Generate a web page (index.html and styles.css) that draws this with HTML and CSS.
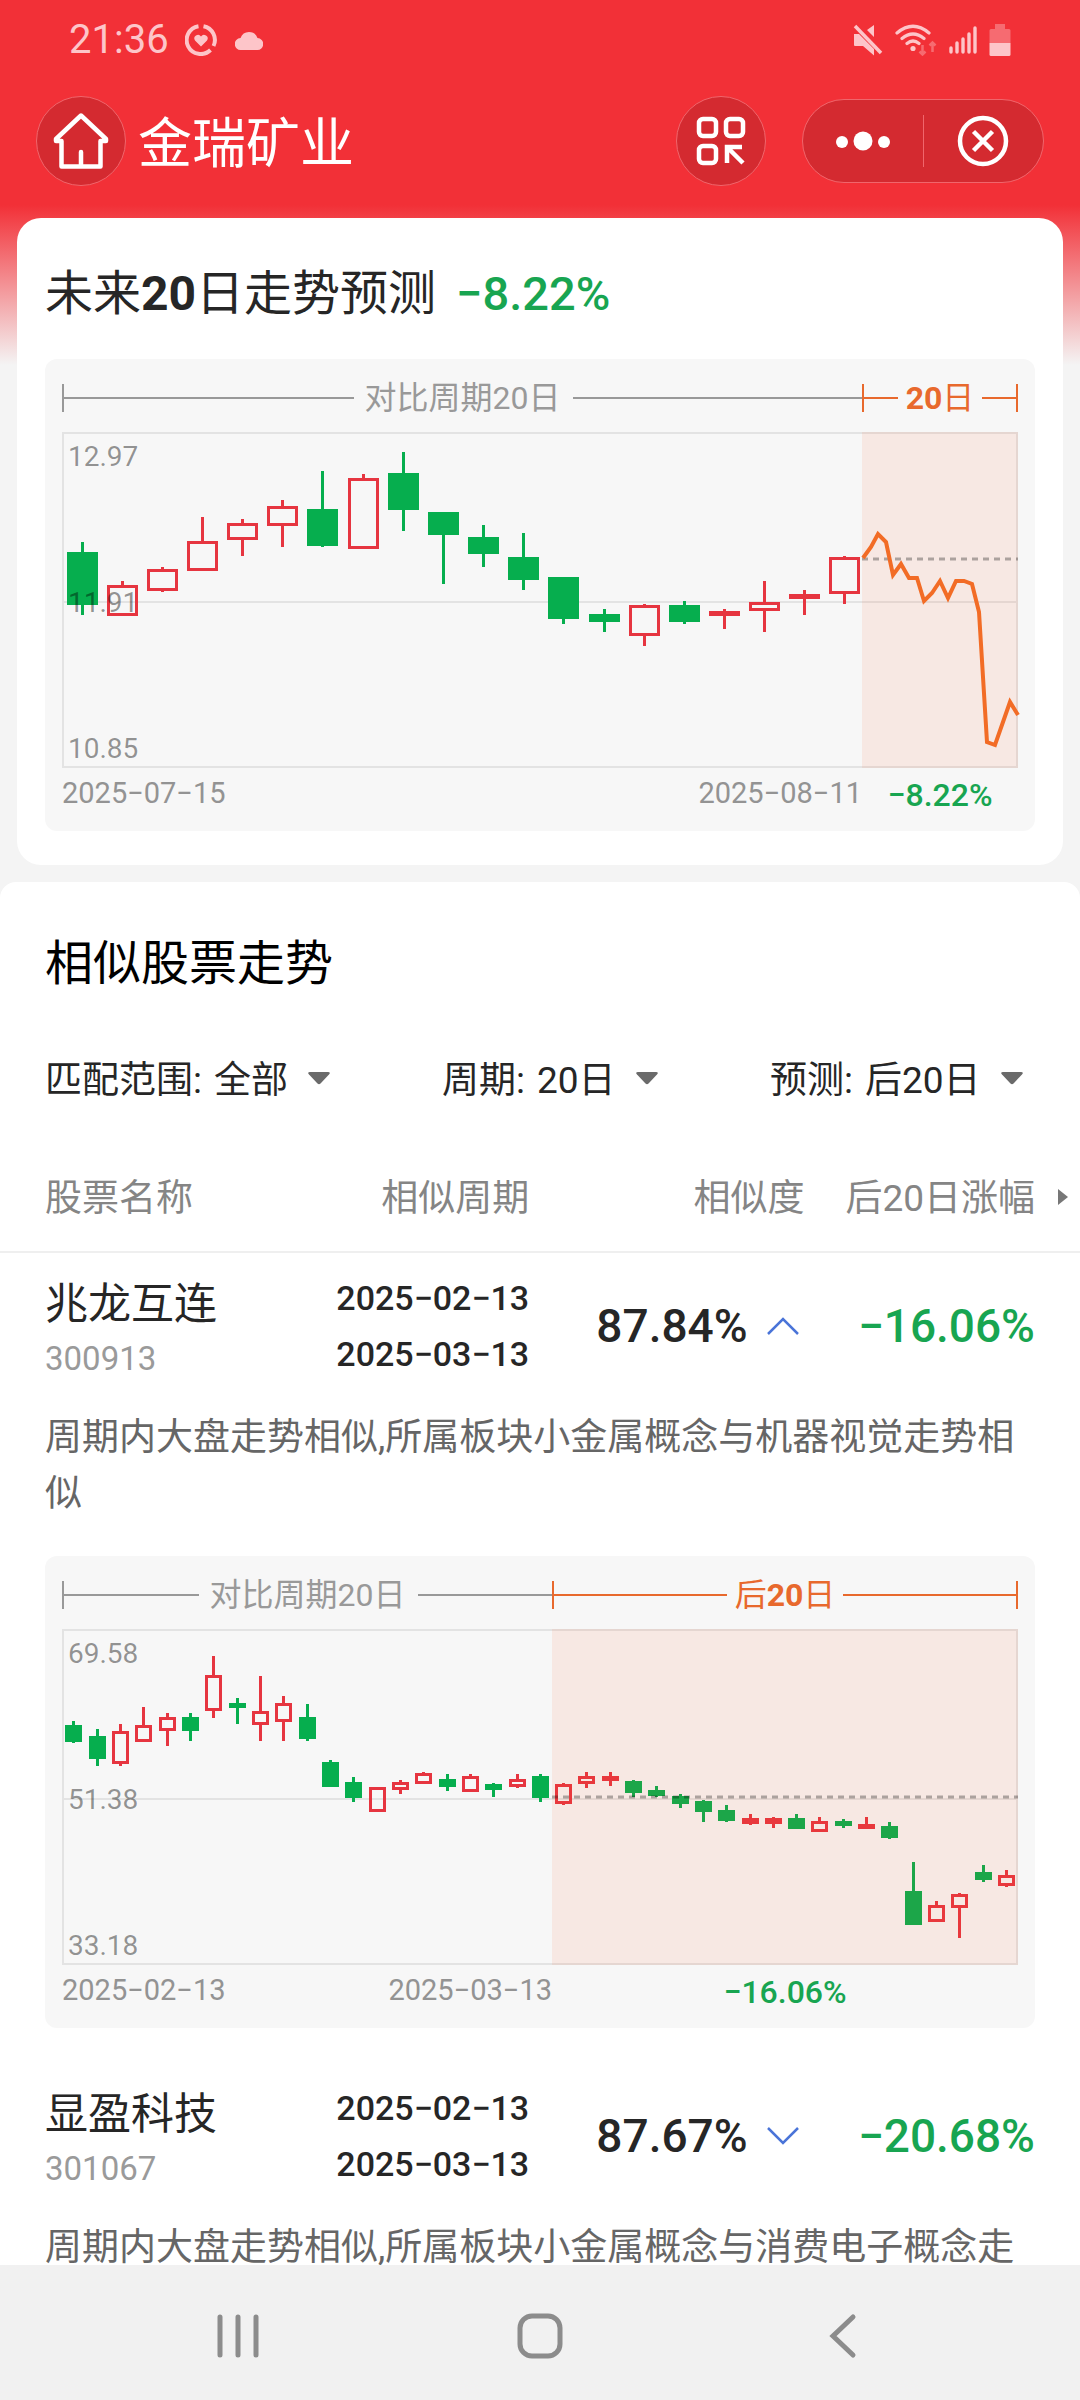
FILE: index.html
```html
<!DOCTYPE html>
<html lang="zh-CN">
<head>
<meta charset="utf-8">
<meta name="viewport" content="width=device-width, initial-scale=1">
<title>金瑞矿业</title>
<link rel="stylesheet" href="styles.css">
</head>
<body>
<div class="screen">
  <header class="top">
    <div class="status">
      <span class="clock">21:36</span>
      <svg class="st-ring" width="32" height="32" viewBox="0 0 32 32" fill="none" stroke="currentColor" stroke-width="4"><path d="M18.500 2.200A14 14 0 0 1 28.500 22M25.500 26A14 14 0 1 1 13.500 2.200"/><path d="M16 22.500l-6-6a3.600 3.600 0 0 1 6-4a3.600 3.600 0 0 1 6 4z" fill="currentColor" stroke="none"/></svg>
      <svg class="st-cloud" width="28" height="20" viewBox="0 0 28 20" fill="currentColor"><path d="M6 20a6 6 0 0 1-.5-12A9 9 0 0 1 22.500 8A6 6 0 0 1 22 20z"/></svg>
      <span class="spacer"></span>
      <svg width="30" height="32" viewBox="0 0 30 32" fill="currentColor"><path d="M1 10h5l15 15v6.500L10 22H2q-1 0-1-1zM21 1v12l-7-7z"/><path d="M2 2l26 27" stroke="currentColor" stroke-width="3.500"/></svg>
      <svg width="42" height="32" viewBox="0 0 42 32" fill="none" stroke="currentColor" stroke-width="3.200" stroke-linecap="round"><path d="M2 9Q18-4.500 34 9M7 14.500Q18 5.500 29 14.500M12 19.500Q18 14.500 24 19.500"/><circle cx="18" cy="24.500" r="2.600" fill="currentColor" stroke="none"/><path class="dim" d="M27.500 21v9M24.500 27.500l3 3 3-3M37.500 28v-9M34.500 21.500l3-3 3 3" stroke-width="2.500" stroke-linecap="butt"/></svg>
      <svg width="28" height="30" viewBox="0 0 28 30" stroke="currentColor" stroke-width="3.400" stroke-linecap="round"><path d="M2 27v-4M8 27v-9M14 27V14M20 27V9M26 27V3"/></svg>
      <svg width="22" height="34" viewBox="0 0 22 34" fill="currentColor"><path class="dim" d="M6 1h10v5h4q1.500 0 1.500 1.500V20H.5V7.500Q.5 6 2 6h4z"/><path d="M.5 20h21v11.500q0 1.500-1.500 1.500H2q-1.500 0-1.500-1.500z"/></svg>
    </div>
    <nav class="appbar">
      <button class="round" type="button" aria-label="首页"><svg width="56" height="56" viewBox="0 0 56 56" fill="none" stroke="currentColor" stroke-width="4.500" stroke-linejoin="round" stroke-linecap="round"><path d="M28 2.500L3 26v2h5.500v25.500h39V28H53v-2zM28 53V39"/></svg></button>
      <h1>金瑞矿业</h1>
      <button class="round scan" type="button" aria-label="扫码"><svg width="50" height="50" viewBox="0 0 50 50" fill="none" stroke="currentColor" stroke-width="4.500"><rect x="3" y="3" width="17" height="17" rx="4"/><rect x="30" y="3" width="17" height="17" rx="4"/><rect x="3" y="30" width="17" height="17" rx="4"/><path d="M46 31H31v16M32 32l15 15"/></svg></button>
      <div class="capsule">
        <button type="button" aria-label="更多"><svg width="54" height="20" viewBox="0 0 54 20" fill="currentColor"><circle cx="6" cy="11" r="6"/><circle cx="27" cy="10" r="9.500"/><circle cx="48" cy="11" r="6"/></svg></button>
        <button type="button" aria-label="关闭"><svg width="52" height="52" viewBox="0 0 52 52" fill="none" stroke="currentColor" stroke-width="4.500"><circle cx="26" cy="26" r="23"/><path d="M16.500 16.500l19 19M35.500 16.500l-19 19"/></svg></button>
      </div>
    </nav>
  </header>

  <main class="content">
    <section class="card">
      <h2>未来<b>20</b>日走势预测 <span class="down">−8.22%</span></h2>
      <figure class="chart" data-chart="forecast">
        <div class="range">
          <div class="span"><i class="tick"></i><i class="rule"></i><span>对比周期20日</span><i class="rule"></i></div>
          <div class="span after"><i class="tick"></i><i class="rule"></i><span><b>20</b>日</span><i class="rule"></i><i class="tick"></i></div>
        </div>
        <svg class="plot" viewBox="0 0 956 336" role="img" aria-label="未来20日走势预测"></svg>
        <figcaption class="dates">
          <div class="ends"><span>2025−07−15</span><span>2025−08−11</span></div>
          <div class="down">−8.22%</div>
        </figcaption>
      </figure>
    </section>

    <section class="similar">
      <h2>相似股票走势</h2>
      <form class="filters">
        <div class="filter"><label for="scope">匹配范围:</label><select id="scope"><option>全部</option></select><svg width="22" height="13" viewBox="0 0 22 13"><path d="M2 0h18q3 0 1 2.500l-8.500 9q-1.500 1.500-3 0L1 2.500Q-1 0 2 0z"/></svg></div>
        <div class="filter"><label for="period">周期:</label><select id="period"><option>20日</option></select><svg width="22" height="13" viewBox="0 0 22 13"><path d="M2 0h18q3 0 1 2.500l-8.500 9q-1.500 1.500-3 0L1 2.500Q-1 0 2 0z"/></svg></div>
        <div class="filter"><label for="ahead">预测:</label><select id="ahead"><option>后20日</option></select><svg width="22" height="13" viewBox="0 0 22 13"><path d="M2 0h18q3 0 1 2.500l-8.500 9q-1.500 1.500-3 0L1 2.500Q-1 0 2 0z"/></svg></div>
      </form>
      <table class="stocks">
        <thead>
          <tr><th class="c-name">股票名称</th><th class="c-period">相似周期</th><th class="c-match">相似度</th><th class="c-change">后20日涨幅<svg class="more" width="10" height="16" viewBox="0 0 10 16"><path d="M0 0l10 8-10 8z"/></svg></th></tr>
        </thead>
        <tbody>
          <tr class="row">
            <td class="name">兆龙互连<small>300913</small></td>
            <td class="period">2025−02−13<br>2025−03−13</td>
            <td class="match"><button type="button" aria-expanded="true">87.84%<svg width="34" height="20" viewBox="0 0 34 20"><path d="M2 18L17 3l15 15"/></svg></button></td>
            <td class="change down">−16.06%</td>
          </tr>
          <tr><td class="detail" colspan="4">
            <p>周期内大盘走势相似,所属板块小金属概念与机器视觉走势相似</p>
            <figure class="chart" data-chart="match">
              <div class="range">
                <div class="span"><i class="tick"></i><i class="rule"></i><span>对比周期20日</span><i class="rule"></i></div>
                <div class="span after"><i class="tick"></i><i class="rule"></i><span>后<b>20</b>日</span><i class="rule"></i><i class="tick"></i></div>
              </div>
              <svg class="plot" viewBox="0 0 956 336" role="img" aria-label="兆龙互连走势"></svg>
              <figcaption class="dates">
                <div class="ends"><span>2025−02−13</span><span>2025−03−13</span></div>
                <div class="down">−16.06%</div>
              </figcaption>
            </figure>
          </td></tr>
          <tr class="row">
            <td class="name">显盈科技<small>301067</small></td>
            <td class="period">2025−02−13<br>2025−03−13</td>
            <td class="match"><button type="button" aria-expanded="false">87.67%<svg width="34" height="20" viewBox="0 0 34 20"><path d="M2 2l15 15L32 2"/></svg></button></td>
            <td class="change down">−20.68%</td>
          </tr>
          <tr><td class="detail" colspan="4"><p>周期内大盘走势相似,所属板块小金属概念与消费电子概念走</p></td></tr>
        </tbody>
      </table>
    </section>
  </main>

  <nav class="system">
    <button type="button" aria-label="最近任务"><svg width="48" height="48" viewBox="0 0 48 48"><path d="M6 5v38M24 5v38M42 5v38"/></svg></button>
    <button type="button" aria-label="主屏幕"><svg width="48" height="48" viewBox="0 0 48 48"><rect x="4" y="4" width="40" height="40" rx="12"/></svg></button>
    <button type="button" aria-label="返回"><svg width="48" height="48" viewBox="0 0 48 48"><path d="M35 5L15 24l20 19"/></svg></button>
  </nav>
</div>
<script src="charts.js"></script>
</body>
</html>
```
FILE: styles.css
```css
* { box-sizing: border-box; }

body {
  margin: 0;
  background: #f4f4f4;
  color: #262626;
  font-family: Roboto, "Noto Sans CJK SC", sans-serif;
  font-weight: 400;
}

h1, h2, p, figure { margin: 0; font-weight: 400; }
svg { display: block; flex: none; }
button {
  margin: 0;
  padding: 0;
  border: 0;
  background: none;
  color: inherit;
  font: inherit;
  display: flex;
  align-items: center;
  justify-content: center;
}

.screen {
  height: 100vh;
  display: flex;
  flex-direction: column;
  overflow: hidden;
  background: linear-gradient(#f23037 205px, #f4f4f4 365px);
}
.down { color: #18a551; font-weight: 500; }

/* status bar */
.top { flex: none; color: #fff; }
.status {
  display: flex;
  align-items: center;
  gap: 12px;
  height: 76px;
  padding: 3px 69px 0;
  color: #fdc5c9;
}
.clock { font-size: 40px; line-height: 48px; }
.st-ring { margin-left: 4px; }
.st-cloud { margin-left: 6px; }
.spacer { flex: 1; }
.dim { opacity: .4; }

/* app bar */
.appbar {
  display: flex;
  align-items: center;
  height: 130px;
  padding: 0 36px;
}
.appbar h1 { margin-left: 12px; padding-top: 8px; font-size: 54px; line-height: 76px; }
.round {
  width: 90px;
  height: 90px;
  border: 1px solid #f0666c;
  border-radius: 50%;
  background: #d42a30;
}
.scan { margin: 0 36px 0 auto; }
.capsule {
  display: flex;
  width: 242px;
  height: 84px;
  border: 1px solid #f0666c;
  border-radius: 42px;
  background: #d42a30;
}
.capsule button { flex: 1; position: relative; }
.capsule button + button::before {
  content: "";
  position: absolute;
  left: 0;
  top: 15px;
  bottom: 15px;
  width: 1px;
  background: #f0666c;
}

/* content */
.content { flex: 1; min-height: 0; overflow: hidden; padding-top: 12px; }
.card {
  margin: 0 17px 17px;
  padding: 44px 28px 34px;
  border-radius: 24px;
  background: #fff;
}
.card h2 { margin-bottom: 33px; font-size: 48px; line-height: 64px; }
.card h2 b { font-weight: 700; }
.card h2 .down { margin-left: 8px; font-size: 47px; }

/* chart */
.chart {
  padding: 17px 17px;
  border-radius: 12px;
  background: #f7f7f7;
}
.range, .dates { display: grid; grid-template-columns: var(--before) 1fr; }
.range { height: 44px; margin-bottom: 12px; color: #999; font-size: 32px; line-height: 44px; }
.span { display: flex; align-items: center; }
.span span { padding: 0 12px 0 11px; white-space: nowrap; }
.span.after { color: #e8692d; }
.span.after span { padding: 0 8px; }
.tick { width: 2px; height: 28px; background: currentColor; }
.rule { flex: 1; height: 2px; background: currentColor; }
.plot { width: 100%; height: auto; overflow: visible; }
.dates { margin-top: 9px; font-size: 29px; line-height: 32px; color: #939393; }
.ends { display: flex; justify-content: space-between; }
.dates .down { font-size: 32px; line-height: 37px; text-align: center; }

.frame { fill: none; stroke: #e3e3e3; stroke-width: 2; }
.zone { fill: #ff5a1f; fill-opacity: .09; }
.base { stroke: #000; stroke-opacity: .3; stroke-width: 3; stroke-dasharray: 6 5; }
.trend { fill: none; stroke: #f26c26; stroke-width: 4; }
.wick { stroke-width: 3; }
.body { stroke-width: 3; }
.up { stroke: #e63540; fill: none; }
.up.flat { fill: #fb2c38; }
.fall { stroke: #06ae4e; fill: #06ae4e; }
.scale { fill: #000; fill-opacity: .42; font-size: 28px; }

/* similar stocks */
.similar { padding-top: 50px; border-radius: 16px 16px 0 0; background: #fff; }
.similar h2 { padding: 0 45px; font-size: 48px; line-height: 64px; color: #000; }
.filters {
  display: flex;
  justify-content: space-between;
  padding: 0 57px 0 45px;
  margin: 57px 0 34px;
}
.filter { display: flex; align-items: center; font-size: 37px; line-height: 56px; }
.filter select {
  appearance: none;
  margin: 0 20px 0 12px;
  padding: 0;
  border: 0;
  background: none;
  color: inherit;
  font: inherit;
}
.filter svg { margin-bottom: 6px; fill: #6a6a6a; }

.stocks { width: 100%; table-layout: fixed; border-collapse: collapse; }
.stocks th {
  padding: 28px 0 24px;
  border-bottom: 2px solid #efefef;
  color: #858585;
  font-size: 37px;
  line-height: 56px;
  font-weight: 400;
  text-align: right;
  white-space: nowrap;
}
.stocks .c-name { width: 28%; padding-left: 45px; text-align: left; }
.c-period { width: 21%; }
.stocks .c-change { position: relative; padding-right: 45px; }
.more { position: absolute; right: 12px; top: 50%; margin-top: -8px; fill: #777; }

.row td { padding: 17px 0; text-align: right; line-height: 56px; white-space: nowrap; }
.row .name { padding: 22px 0 12px 45px; font-size: 43px; text-align: left; }
.name small { display: block; font-size: 33px; line-height: 54px; color: #9a9a9a; }
.row .period { font-size: 34px; font-weight: 500; }
.match button { margin-left: auto; gap: 18px; font-size: 46px; font-weight: 500; }
.row .match { padding-right: 5px; }
.match path { fill: none; stroke: #4a74d8; stroke-width: 2.500; }
.row .change { padding-right: 45px; font-size: 46px; }
.detail { padding: 11px 45px 35px; }
.detail p { font-size: 37px; line-height: 56px; color: #666; }
.detail .chart { margin-top: 34px; }

/* system navigation */
.system {
  flex: none;
  display: grid;
  grid-template-columns: repeat(3, 28%);
  justify-content: center;
  align-items: center;
  height: 135px;
  padding-top: 6px;
  background: #f1f1f1;
}
.system svg { fill: none; stroke: #8c8c8c; stroke-width: 5; stroke-linecap: round; }
```
FILE: charts.js
```js
// Candle: [high, top of body, bottom of body, low, 1 = rise / 0 = fall], in plot units.
const CHARTS = {
  forecast: {
    split: 800, end: 803, base: 127, scale: ["12.97", "11.91", "10.85"], width: 31,
    before: [
      [110,120,173,183,0],[149,153,184,184,1],[135,137,159,160,1],[85,109,139,139,1],
      [87,91,108,124,1],[68,74,94,115,1],[39,77,114,115,0],[42,46,117,117,1],
      [20,41,78,99,0],[80,80,103,152,0],[93,105,122,135,0],[101,125,148,158,0],
      [145,145,187,192,0],[177,182,190,200,0],[172,173,204,214,1],[169,173,190,192,0],
      [177,179,184,197,1],[149,170,179,200,1],[158,162,167,183,1],[124,125,162,172,1]
    ],
    after: [],
    trend: "801,126 809,115 816,102 824,110 831,143 839,132 847,146 855,146 862,169 870,161 878,149 886,166 894,149 902,149 910,152 917,180 925,310 933,313 948,270 956,283"
  },
  match: {
    split: 490, end: 490, base: 168, scale: ["69.58", "51.38", "33.18"], width: 17,
    before: [
      [92,96,113,114,0],[100,107,130,137,0],[95,102,135,137,1],[78,96,113,113,1],
      [84,88,102,117,1],[84,88,102,112,0],[27,46,82,89,1],[69,74,79,95,0],
      [47,82,96,112,1],[67,74,93,112,1],[75,88,110,112,0],[131,133,158,158,0],
      [148,153,169,173,0],[158,158,183,183,1],[151,153,161,165,1],[143,144,155,155,1],
      [145,150,158,162,0],[145,147,163,163,1],[154,155,161,168,0],[145,150,158,159,1],
      [145,147,169,173,0]
    ],
    after: [
      [154,155,175,176,1],[143,147,155,159,1],[143,147,152,157,1],[151,152,164,168,0],
      [157,161,167,168,0],[165,167,175,179,0],[171,172,183,193,0],[176,181,192,193,0],
      [185,189,195,196,1],[188,189,195,199,1],[185,189,200,200,0],[188,192,203,203,1],
      [190,192,197,199,0],[188,195,200,200,1],[193,197,209,210,0],[233,262,296,296,0],
      [272,276,293,293,1],[264,265,279,309,1],[236,243,251,253,0],[241,246,257,258,1]
    ]
  }
};
const W = 956, H = 336, MID = 170;

function candles(list, from, to, width) {
  const step = (to - from) / list.length;
  return list.map(([high, top, bottom, low, rise], i) => {
    const x = Math.round(from + step * (i + 0.5) - 0.5) + 0.5;
    const kind = rise ? "up" : "fall";
    const flat = bottom - top < 7 ? " flat" : "";
    return `<path class="wick ${kind}" d="M${x} ${high}V${top}M${x} ${bottom}V${low}"/>` +
      `<rect class="body ${kind}${flat}" x="${x - width / 2 + 1.5}" y="${top + 1.5}" width="${width - 3}" height="${bottom - top - 3}"/>`;
  }).join("");
}

document.querySelectorAll("[data-chart]").forEach(figure => {
  const c = CHARTS[figure.dataset.chart];
  figure.style.setProperty("--before", (c.split / W * 100) + "%");
  figure.querySelector(".plot").innerHTML =
    `<path class="frame" d="M1 1H955V335H1zM1 ${MID}H955"/>` +
    candles(c.before, 0, c.end, c.width) +
    candles(c.after, c.split, W, c.width) +
    `<rect class="zone" x="${c.split}" y="0" width="${W - c.split}" height="${H}"/>` +
    `<path class="base" d="M${c.split} ${c.base}H${W}"/>` +
    (c.trend ? `<polyline class="trend" points="${c.trend}"/>` : "") +
    c.scale.map((label, i) => `<text class="scale" x="6" y="${34 + i * 146}">${label}</text>`).join("");
});
```
